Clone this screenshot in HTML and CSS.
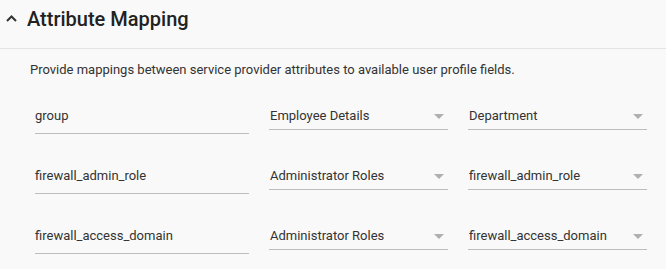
FILE: index.html
```html
<!DOCTYPE html>
<html lang="en">
<head>
    <meta charset="UTF-8">
    <title>Attribute Mapping</title>
    <link rel="stylesheet" href="styles.css">
</head>
<body>
<div id="panel">
    <div id="titlebar">
        <svg class="chevron" width="11" height="7" viewBox="0 0 11 7"><polyline points="1,6 5.5,1.5 10,6" fill="none" stroke="#333" stroke-width="2"/></svg>
        <h2>Attribute Mapping</h2>
    </div>
    <div id="content">
        <p class="hint">Provide mappings between service provider attributes to available user profile fields.</p>
        <div class="row">
            <div class="field">group</div>
            <div class="select"><span>Employee Details</span><i class="arrow"></i></div>
            <div class="select"><span>Department</span><i class="arrow"></i></div>
        </div>
        <div class="row">
            <div class="field">firewall_admin_role</div>
            <div class="select"><span>Administrator Roles</span><i class="arrow"></i></div>
            <div class="select"><span>firewall_admin_role</span><i class="arrow"></i></div>
        </div>
        <div class="row">
            <div class="field">firewall_access_domain</div>
            <div class="select"><span>Administrator Roles</span><i class="arrow"></i></div>
            <div class="select"><span>firewall_access_domain</span><i class="arrow"></i></div>
        </div>
    </div>
</div>
</body>
</html>
```

FILE: styles.css
```css
html, body {
    margin: 0;
    background-color: #f9f9f9;
}
#panel {
    font-family: Roboto, "Liberation Sans", sans-serif;
    color: #2b2b2b;
}
#titlebar {
    display: flex;
    align-items: center;
    gap: 10px;
    padding: 7px 0 17px 6px;
    border-bottom: 1px solid #e3e3e3;
}
#titlebar h2 {
    margin: 0;
    font-size: 20px;
    font-weight: 500;
    line-height: 24px;
    color: #222;
}
.chevron {
    display: block;
    margin-top: -2px;
}
#content {
    padding: 13px 0 0 30px;
}
.hint {
    margin: 0 0 30px 0;
    font-size: 13px;
    line-height: 16px;
    color: #333;
}
.row {
    display: grid;
    grid-template-columns: 214px 179px 179px;
    column-gap: 20px;
    align-items: start;
    height: 60px;
    padding-left: 5px;
}
.row:last-child {
    height: auto;
}
.field, .select {
    font-size: 13px;
    line-height: 16px;
    border-bottom: 1px solid #bdbdbd;
    color: #333;
}
.field {
    padding-bottom: 9px;
}
.select {
    display: flex;
    justify-content: space-between;
    align-items: center;
    padding: 0 4px 5px 1px;
}
.arrow {
    width: 0;
    height: 0;
    border-left: 5px solid transparent;
    border-right: 5px solid transparent;
    border-top: 5px solid #b0b0b0;
}
```
